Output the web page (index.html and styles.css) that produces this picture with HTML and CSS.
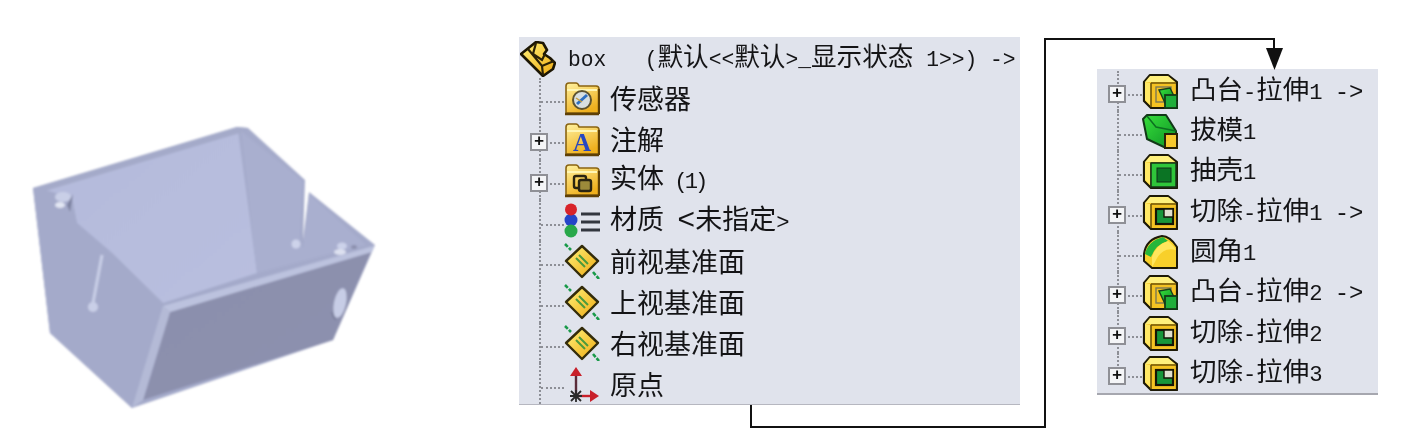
FILE: index.html
```html
<!DOCTYPE html>
<html lang="zh">
<head>
<meta charset="utf-8">
<title>box</title>
<link rel="stylesheet" href="styles.css">
</head>
<body>
<svg class="defs" width="0" height="0" aria-hidden="true">
  <defs>
    <linearGradient id="gFolder" x1="0" y1="0" x2="0.5" y2="1"><stop offset="0" stop-color="#fff2a0"/><stop offset="1" stop-color="#efb01e"/></linearGradient>
    <linearGradient id="gYellow" x1="0" y1="0" x2="1" y2="1"><stop offset="0" stop-color="#fff27a"/><stop offset="1" stop-color="#eeaa12"/></linearGradient>
    <linearGradient id="gGreen" x1="0" y1="0" x2="1" y2="1"><stop offset="0" stop-color="#38e03c"/><stop offset="1" stop-color="#0b8f24"/></linearGradient>
    <symbol id="folder" viewBox="0 0 36 36">
      <path d="M2 33V6q0-3 3-3h7q2 0 3 3h17q3 0 3 3v24z" fill="url(#gFolder)" stroke="#8a6412" stroke-width="1.6"/>
      <path d="M3 10H33" stroke="#fff6b4" stroke-width="2"/>
      <path d="M1 34H35M35 9V34" stroke="#5e4006" stroke-width="2.4"/>
    </symbol>
    <symbol id="cube" viewBox="0 0 36 36">
      <path d="M2 9 8 2H26L35 9V35H9L2 28z" fill="#f5c322" stroke="#1d1a08" stroke-width="2.2" stroke-linejoin="round"/>
      <path d="M3 9 8 3H26L33 9H9z" fill="#fff07c"/>
      <path d="M3 9 9 10V33L3 27z" fill="#ffe865"/>
      <path d="M9 10H34M9 10V34" fill="none" stroke="#6e5408" stroke-width="1.6"/>
    </symbol>
    <symbol id="plane" viewBox="0 0 36 36">
      <path d="M1 1 7 7M29 29 35 36" stroke="#1a9a4a" stroke-width="2.6" stroke-dasharray="4 1.5"/>
      <path d="M18 3 34 18 18 34 2 18z" fill="url(#gYellow)" stroke="#332c0a" stroke-width="2.4" stroke-linejoin="round"/>
      <path d="M12 15 21 24M15 12 24 21" stroke="#4b9a3c" stroke-width="2"/>
    </symbol>
    <symbol id="boss" viewBox="0 0 36 36">
      <use href="#cube"/>
      <rect x="14" y="14" width="15" height="15" fill="none" stroke="#7d7a55" stroke-width="1.4"/>
      <path d="M17 17 28 15 32 23 23 30z" fill="url(#gGreen)" stroke="#14401c" stroke-width="1.4"/>
      <rect x="23" y="22" width="12" height="13" fill="#1fae3a" stroke="#123a18" stroke-width="1.8"/>
    </symbol>
    <symbol id="cut" viewBox="0 0 36 36">
      <use href="#cube"/>
      <rect x="14" y="15" width="17" height="15" fill="#17963a" stroke="#151505" stroke-width="2.2"/>
      <path d="M22 15H31V23H22z" fill="#dfe0d0" stroke="#151505" stroke-width="1.4"/>
    </symbol>
  </defs>
</svg>

<main class="figure">
  <svg class="model" viewBox="0 0 420 330" role="img" aria-label="box">
    <defs>
      <linearGradient id="gFront" x1="0" y1="0" x2="1" y2="1"><stop offset="0" stop-color="#8b8fac"/><stop offset="1" stop-color="#8d91af"/></linearGradient>
      <linearGradient id="gBack" x1="0" y1="0" x2="1" y2="1"><stop offset="0" stop-color="#b4badb"/><stop offset="1" stop-color="#b9bfdf"/></linearGradient>
      <filter id="soft"><feGaussianBlur stdDeviation="1"/></filter>
    </defs>
    <g filter="url(#soft)">
      <path d="M33 88 237 27 248 28 305 80 303 140 309 92 375 145 333 240 132 308 50 233z" fill="#a4aaca"/>
      <path d="M238 30 257 173 163 203 112 153 77 123 72 98 45 90z" fill="url(#gBack)"/>
      <path d="M241 31 303 81 300 140 303 148 309 94 366 145 333 153 257 173z" fill="#a9afcf"/>
      <path d="M33 88 45 90 72 98 77 123 112 153 163 203 132 308 50 233z" fill="#a4aaca"/>
      <path d="M170 212 372 150 333 240 143 300z" fill="url(#gFront)"/>
      <path d="M163 206 370 147 374 146 372 152 170 212z" fill="#bcc2de"/>
      <path d="M163 206 170 212 143 300 132 308z" fill="#b4bad6"/>
      <path d="M33 88 237 27 248 28 240 33 45 91z" fill="#a4aac9"/>
      <path d="M102 155 93 203" stroke="#c9cfe7" stroke-width="3"/>
      <circle cx="93" cy="207" r="5" fill="#c9cfe7"/>
      <circle cx="296" cy="144" r="4.5" fill="#cdd3ea"/>
      <ellipse cx="340" cy="203" rx="6" ry="15" transform="rotate(12 340 203)" fill="#c7cde6"/>
      <path d="M332 212q2 8 4 7" stroke="#777b98" stroke-width="1.5" fill="none"/>
      <ellipse cx="63" cy="97" rx="8" ry="5" fill="#c9cfe7"/>
      <ellipse cx="60" cy="105" rx="5" ry="3" fill="#e2e6f3"/>
      <path d="M73 94 70 112 67 105 72 96z" fill="#7c819f"/>
      <ellipse cx="342" cy="146" rx="5" ry="3.5" fill="#ccd2ea"/>
      <ellipse cx="340" cy="152" rx="6" ry="3" fill="#dde1f0"/>
      <ellipse cx="354" cy="147" rx="3" ry="2" fill="#8c90ae"/>
    </g>
  </svg>

  <section class="tree tree-main">
    <div class="root-row">
      <svg class="icon root-icon" viewBox="0 0 36 36">
        <path d="M1 13 16 1 23 2 27 9 24 13 30 17 35 22 33 28 23 35z" fill="url(#gYellow)" stroke="#1c1603" stroke-width="2.6" stroke-linejoin="round"/>
        <path d="M8 8 22 25 34 20M16 2 13 13 22 19 25 13M22 25 23 34" fill="none" stroke="#2b2206" stroke-width="2.2"/>
      </svg>
      <span class="root-label"><span class="lat-root">box   (</span>默认<span class="lat-root">&lt;&lt;</span>默认<span class="lat-root">&gt;_</span>显示状态<span class="lat-root"> 1&gt;&gt;) -&gt;</span></span>
    </div>
    <div class="row"><span class="gutter"></span>
      <svg class="icon"><use href="#folder"/><circle cx="18" cy="20" r="9" fill="#d8dfe0" stroke="#5d5330" stroke-width="2"/><path d="M13 24 23 15" stroke="#2f6fc0" stroke-width="3"/><path d="M12 18 18 22" stroke="#c8a040" stroke-width="1.5"/></svg>
      <span class="label">传感器</span></div>
    <div class="row"><span class="gutter"><span class="plus">+</span></span>
      <svg class="icon"><use href="#folder"/><text class="glyph-a" x="18" y="30" text-anchor="middle">A</text></svg>
      <span class="label">注解</span></div>
    <div class="row"><span class="gutter"><span class="plus">+</span></span>
      <svg class="icon"><use href="#folder"/><rect x="10" y="14" width="12" height="12" rx="2" fill="none" stroke="#2a2410" stroke-width="2.4"/><rect x="15" y="18" width="12" height="11" rx="2" fill="#9c8a3a" stroke="#2a2410" stroke-width="2.4"/></svg>
      <span class="label">实体<span class="lat tight"> (1)</span></span></div>
    <div class="row"><span class="gutter"></span>
      <svg class="icon"><circle cx="7" cy="17" r="6.5" fill="#2545c8"/><circle cx="7" cy="6.5" r="6" fill="#d8232a"/><circle cx="7" cy="28" r="6.5" fill="#28a84a"/><path d="M17 11H36M17 19H36M17 27H36" stroke="#33373f" stroke-width="3"/></svg>
      <span class="label">材质<span class="lat"> </span><span class="chevron">&lt;</span>未指定<span class="lat">&gt;</span></span></div>
    <div class="row"><span class="gutter"></span><svg class="icon"><use href="#plane"/></svg><span class="label">前视基准面</span></div>
    <div class="row"><span class="gutter"></span><svg class="icon"><use href="#plane"/></svg><span class="label">上视基准面</span></div>
    <div class="row"><span class="gutter"></span><svg class="icon"><use href="#plane"/></svg><span class="label">右视基准面</span></div>
    <div class="row"><span class="gutter"></span>
      <svg class="icon"><path d="M12 30V6" stroke="#5b2c3a" stroke-width="2.4"/><path d="M12 1 6 10H18z" fill="#c8202a"/><path d="M12 30H28" stroke="#c8202a" stroke-width="2.4"/><path d="M35 30 26 24V36z" fill="#c8202a"/><path d="M7 25 17 35M17 25 7 35M12 24V36M6 30H18" stroke="#2a2a2a" stroke-width="1.8"/></svg>
      <span class="label">原点</span></div>
  </section>

  <section class="tree tree-features">
    <div class="row"><span class="gutter"><span class="plus">+</span></span>
      <svg class="icon"><use href="#boss"/></svg>
      <span class="label">凸台<span class="lat">-</span>拉伸<span class="lat">1</span><span class="arrow">-&gt;</span></span></div>
    <div class="row"><span class="gutter"></span>
      <svg class="icon"><path d="M1 6 5 2H24L34 18 35 36 26 36 5 26z" fill="url(#gGreen)" stroke="#123818" stroke-width="2" stroke-linejoin="round"/><path d="M5 3 14 14 34 18" fill="none" stroke="#0c7020" stroke-width="1.5"/><rect x="23" y="21" width="12" height="14" fill="#f7c92e" stroke="#2a2206" stroke-width="2"/></svg>
      <span class="label">拔模<span class="lat">1</span></span></div>
    <div class="row"><span class="gutter"></span>
      <svg class="icon"><use href="#cube"/><path d="M9 10H34V34H9z" fill="#2fc63a" stroke="#17341a" stroke-width="1.5"/><rect x="15" y="15" width="14" height="14" fill="#0b7424" stroke="#103018" stroke-width="1"/></svg>
      <span class="label">抽壳<span class="lat">1</span></span></div>
    <div class="row"><span class="gutter"><span class="plus">+</span></span>
      <svg class="icon"><use href="#cut"/></svg>
      <span class="label">切除<span class="lat">-</span>拉伸<span class="lat">1</span><span class="arrow">-&gt;</span></span></div>
    <div class="row"><span class="gutter"></span>
      <svg class="icon"><path d="M2 20Q4 5 20 2 28 2 35 13V34H10L2 27z" fill="#f8d02a" stroke="#1d1a08" stroke-width="2" stroke-linejoin="round"/><path d="M3 20Q6 7 21 3L26 7Q14 10 9 23z" fill="#25b63a"/><path d="M26 7Q32 12 34 16 20 12 13 28L10 33V23Q14 11 26 7z" fill="#ffe65c"/></svg>
      <span class="label">圆角<span class="lat">1</span></span></div>
    <div class="row"><span class="gutter"><span class="plus">+</span></span>
      <svg class="icon"><use href="#boss"/></svg>
      <span class="label">凸台<span class="lat">-</span>拉伸<span class="lat">2</span><span class="arrow">-&gt;</span></span></div>
    <div class="row"><span class="gutter"><span class="plus">+</span></span>
      <svg class="icon"><use href="#cut"/></svg>
      <span class="label">切除<span class="lat">-</span>拉伸<span class="lat">2</span></span></div>
    <div class="row"><span class="gutter"><span class="plus">+</span></span>
      <svg class="icon"><use href="#cut"/></svg>
      <span class="label">切除<span class="lat">-</span>拉伸<span class="lat">3</span></span></div>
  </section>

  <svg class="connector" viewBox="0 0 1427 440" aria-hidden="true">
    <path d="M751 405V427H1045V39H1274V52" fill="none" stroke="#111" stroke-width="2"/>
    <path d="M1266 48H1283L1274.500 70z" fill="#111"/>
  </svg>
</main>
</body>
</html>
```

FILE: styles.css
```css
html, body {
  margin: 0;
  background: #fff;
}

.defs {
  position: absolute;
}

.figure {
  position: relative;
  display: flex;
  align-items: flex-start;
  width: 1427px;
  height: 440px;
  overflow: hidden;
}

.model {
  flex: none;
  width: 420px;
  height: 330px;
  margin-top: 100px;
}

.tree {
  flex: none;
  box-sizing: border-box;
  display: flex;
  flex-direction: column;
  background: #e0e3ec;
  color: #141416;
  font-family: "Noto Sans CJK SC", "Liberation Sans", sans-serif;
  font-size: 27px;
  font-weight: 400;
  white-space: pre;
  filter: blur(.4px);
}

.tree-main {
  width: 501px;
  height: 368px;
  margin: 37px 0 0 99px;
  border-bottom: 1px solid #b6b7c0;
}

.tree-features {
  width: 281px;
  height: 326px;
  margin: 69px 0 0 77px;
  padding-top: 1.5px;
  font-size: 26.5px;
  border-bottom: 2px solid #a6a7af;
}

.root-row {
  flex: none;
  height: 41px;
  display: flex;
  align-items: center;
  gap: 12px;
  font-size: 25.6px;
  line-height: 41px;
}

.root-icon {
  margin: 3px 0 0 1px;
}

.lat-root {
  font-family: "Liberation Mono", monospace;
  font-size: 21.3px;
}

.row {
  flex: 1;
  display: flex;
  align-items: center;
  min-height: 0;
}

.icon {
  flex: none;
  width: 36px;
  height: 36px;
}

.label {
  line-height: 36px;
  margin-left: 10px;
}

.tree-features .label {
  margin-left: 12px;
}

.lat {
  font-family: "Liberation Mono", monospace;
  font-size: 22.2px;
}

.tight {
  letter-spacing: -3px;
}

.chevron {
  font-family: "Liberation Mono", monospace;
  font-size: 30px;
}

.arrow {
  margin-left: 12px;
  font-family: "Liberation Mono", monospace;
  font-size: 24px;
}

.gutter {
  flex: none;
  position: relative;
  align-self: stretch;
  width: 45px;
}

.gutter::before {
  content: "";
  position: absolute;
  left: 20px;
  top: 0;
  bottom: 0;
  border-left: 2px dotted #8d8f96;
}

.gutter::after {
  content: "";
  position: absolute;
  left: 22px;
  right: 0;
  top: calc(50% + 3px);
  border-top: 2px dotted #8d8f96;
}

.tree-features .row:last-child .gutter::before {
  bottom: 50%;
}

.plus {
  position: absolute;
  z-index: 1;
  left: 11px;
  top: 50%;
  width: 14px;
  height: 14px;
  margin-top: -6px;
  border: 2px solid #8f9096;
  background: #f4f5f7;
  color: #111;
  font: bold 17px/14px "Liberation Mono", monospace;
  text-align: center;
}

.glyph-a {
  fill: #2747c0;
  font: bold 25px "Liberation Serif", serif;
}

.connector {
  position: absolute;
  left: 0;
  top: 0;
  width: 1427px;
  height: 440px;
  pointer-events: none;
}
```
